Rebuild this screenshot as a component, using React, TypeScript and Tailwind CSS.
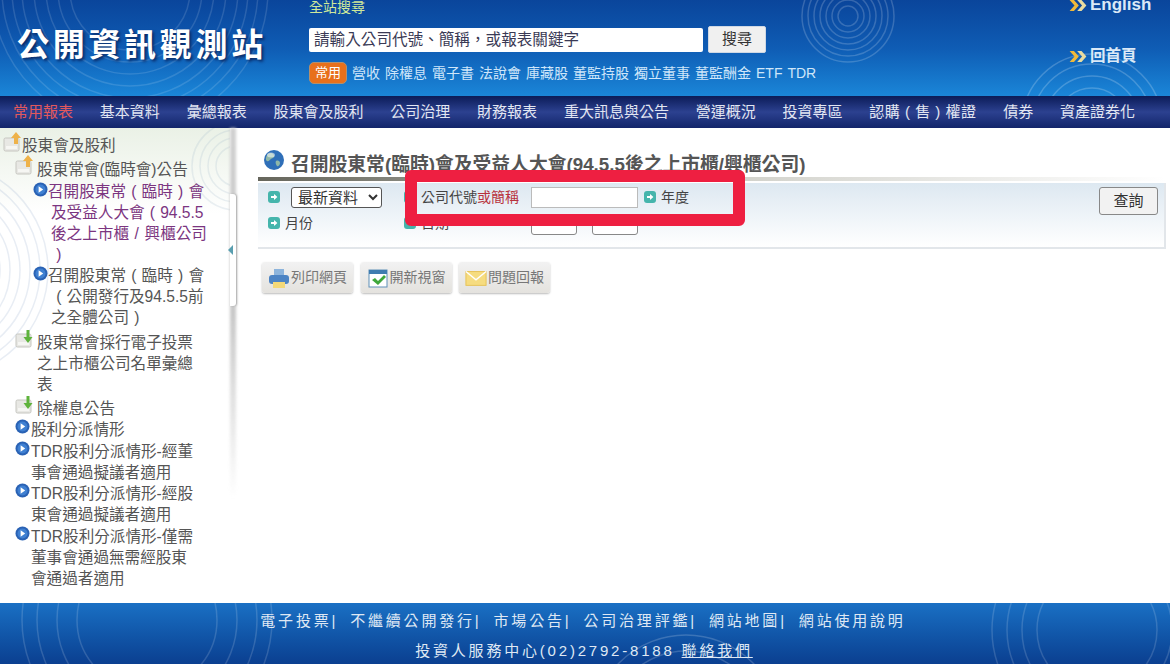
const cjk = "font-['Liberation_Sans','Noto_Sans_CJK_TC',sans-serif]";

function Rings({ className, radii, stroke = "#ffffff", opacity = 0.16 }: { className: string; radii: number[]; stroke?: string; opacity?: number }) {
  const max = radii[radii.length - 1] + 2;
  return (
    <svg className={className} width={max * 2} height={max * 2} viewBox={`${-max} ${-max} ${max * 2} ${max * 2}`} fill="none">
      {radii.map((r) => (
        <circle key={r} r={r} stroke={stroke} strokeOpacity={opacity} strokeWidth="1.5" />
      ))}
    </svg>
  );
}

function Chevrons() {
  return (
    <svg width="20" height="13" viewBox="0 0 17.5 12" className="shrink-0">
      <path d="M1 1h4l4.5 5L5 11H1l4.5-5z" fill="#f0b93a" />
      <path d="M8 1h4l4.5 5L12 11H8l4.5-5z" fill="#e9dca0" />
    </svg>
  );
}

function BlueDot() {
  return (
    <svg width="15" height="15" viewBox="0 0 15 15" className="shrink-0">
      <circle cx="7.5" cy="7.5" r="7" fill="#2a62b4" />
      <circle cx="7.5" cy="7.5" r="5" fill="#3f80d2" />
      <path d="M5.6 4.2l4.6 3.3-4.6 3.3z" fill="#fff" />
    </svg>
  );
}

function Folder({ green }: { green?: boolean }) {
  return (
    <svg width="20" height="20" viewBox="0 0 20 20" className="shrink-0">
      <rect x="1" y="6" width="15" height="13" rx="1.5" fill="#e8e8e4" stroke="#c6c6c0" />
      <rect x="3" y="14" width="11" height="3" fill="#f6f6f3" />
      {green ? (
        <path d="M11.5 2h3v7h3l-4.5 6-4.5-6h3z" fill="#5fb33c" />
      ) : (
        <path d="M13 0l5 6h-3v6h-4V6H8z" fill="#eeb24a" />
      )}
    </svg>
  );
}

function TealArrow() {
  return (
    <svg width="12" height="12" viewBox="0 0 12 12" className="shrink-0">
      <rect width="12" height="12" rx="3" fill="#45b5ac" />
      <path d="M3 5h3V3l3.4 3L6 9V7H3z" fill="#fff" />
    </svg>
  );
}

// the reference's full-width brackets sit in the middle of their box
function Fw({ children }: { children: string }) {
  return <span className="inline-block w-[1em] text-center">{children}</span>;
}

const quick = ["營收", "除權息", "電子書", "法說會", "庫藏股", "董監持股", "獨立董事", "董監酬金", "ETF", "TDR"];
const nav = ["基本資料", "彙總報表", "股東會及股利", "公司治理", "財務報表", "重大訊息與公告", "營運概況", "投資專區", "認購 ( 售 ) 權證", "債券", "資產證券化"];
const footerLinks = ["電子投票", "不繼續公開發行", "市場公告", "公司治理評鑑", "網站地圖", "網站使用說明"];

function Header() {
  return (
    <header className="relative flex h-[96px] shrink-0 overflow-hidden bg-gradient-to-b from-[#0a459b] via-[#0f5cb4] to-[#1b86d8]">
      <Rings className="absolute left-[-10px] top-[-150px]" radii={[60, 72, 84, 96, 108, 118, 128, 138]} opacity={0.13} />
      <Rings className="absolute left-[800px] top-[-32px]" radii={[10, 16, 22, 28, 34, 40, 46]} opacity={0.18} />
      <Rings className="absolute left-[1020px] top-[52px]" radii={[24, 36, 48, 60, 70]} opacity={0.2} />
      <div className="relative w-[309px] shrink-0 pl-[17px] pt-[22px]">
        <div className="whitespace-nowrap font-['Noto_Sans_CJK_TC',sans-serif] text-[32px] font-bold leading-[40px] tracking-[3.7px] text-white [text-shadow:2px_2px_3px_#0a2a66]">
          公開資訊觀測站
        </div>
      </div>
      <div className="relative w-[700px] shrink-0">
        <div className="h-[26px] text-[14px] leading-[15px] text-[#cfe89a]">全站搜尋</div>
        <div className="flex items-center gap-[5px]">
          <div className="flex h-[24px] w-[394px] items-center rounded-[2px] bg-white pl-[5px] text-[15.6px] text-[#3a3a55]">請輸入公司代號、簡稱，或報表關鍵字</div>
          <button className="h-[27px] w-[58px] rounded-[2px] border border-[#cfd8e4] bg-[#f0f0f0] text-[15px] text-[#333]">搜尋</button>
        </div>
        <div className="mt-[9px] flex items-center gap-[5px] text-[14px] text-[#cfe6fa]">
          <span className="flex h-[22px] w-[38px] items-center justify-center rounded-[5px] border border-[#b09070] bg-[#e8701c] text-[13px] text-white">常用</span>
          {quick.map((q) => (
            <span key={q}>{q}</span>
          ))}
        </div>
      </div>
      <div className="relative flex-1 pl-[59px]">
        <div className="mt-[-4px] flex items-center gap-[2px] text-[17px] font-bold leading-[18px] text-[#dbe9f7]">
          <Chevrons />
          English
        </div>
        <div className="mt-[33px] flex items-center gap-[2px] text-[15.5px] font-bold leading-[18px] text-[#dbe9f7]">
          <Chevrons />
          回首頁
        </div>
      </div>
    </header>
  );
}

function Nav() {
  return (
    <nav className="flex h-[32px] shrink-0 items-center gap-[26.8px] bg-gradient-to-b from-[#0c1c58] via-[#2c4190] to-[#12256a] pl-[13px] text-[15px] text-[#e2e6f2]">
      <span className="text-[#e2585c]">常用報表</span>
      {nav.map((n) => (
        <span key={n} className={n.includes("(") ? "whitespace-nowrap tracking-[0.5px]" : "whitespace-nowrap"}>{n}</span>
      ))}
    </nav>
  );
}

function Sidebar() {
  return (
    <aside className="relative w-[230px] shrink-0 overflow-hidden bg-gradient-to-b from-[#eaf1e6] to-white to-[18%] text-[15.6px] leading-[21px] text-[#555]">
      <Rings className="absolute left-[-170px] top-[32px]" radii={[60, 70, 80, 90, 100, 108]} stroke="#8aa6c8" opacity={0.2} />
      <Rings className="absolute left-[190px] top-[-8px]" radii={[20, 28, 36, 44]} stroke="#9bb3c8" opacity={0.2} />
      <div className="relative pt-[7px]">
        <div className="flex pl-[3px]">
          <span className="-mt-[3px]"><Folder /></span>
          <span className="-ml-px">股東會及股利</span>
        </div>
        <div className="mt-[3px] flex pl-[15px]">
          <span className="-mt-[4px] mr-[2px]"><Folder /></span>
          <span>股東常會(臨時會)公告</span>
        </div>
        <div className="mt-[1px] flex pl-[33px]">
          <span className="mt-[1px]"><BlueDot /></span>
          <div className="text-[#7b3580]">
            <div>召開股東常<Fw>(</Fw>臨時<Fw>)</Fw>會</div>
            <div className="pl-[3px]">及受益人大會<Fw>(</Fw>94.5.5</div>
            <div className="pl-[3px]">後之上市櫃<Fw>/</Fw>興櫃公司</div>
            <div className="pl-[3px]"><Fw>)</Fw></div>
          </div>
        </div>
        <div className="flex pl-[33px]">
          <span className="mt-[1px]"><BlueDot /></span>
          <div>
            <div>召開股東常<Fw>(</Fw>臨時<Fw>)</Fw>會</div>
            <div className="pl-[3px]"><Fw>(</Fw>公開發行及94.5.5前</div>
            <div className="pl-[3px]">之全體公司<Fw>)</Fw></div>
          </div>
        </div>
        <div className="mt-[4px] flex pl-[15px]">
          <span className="-mt-[4px] mr-[2px]"><Folder green /></span>
          <div>
            <div>股東常會採行電子投票</div>
            <div>之上市櫃公司名單彙總</div>
            <div>表</div>
          </div>
        </div>
        <div className="mt-[3px] flex pl-[15px]">
          <span className="-mt-[4px] mr-[2px]"><Folder green /></span>
          <span>除權息公告</span>
        </div>
        <div className="flex pl-[15px]">
          <span className="mr-[1px]"><BlueDot /></span>
          <span>股利分派情形</span>
        </div>
        <div className="mt-[1px] flex pl-[15px]">
          <span className="mr-[1px]"><BlueDot /></span>
          <div>
            <div>TDR股利分派情形-經董</div>
            <div>事會通過擬議者適用</div>
          </div>
        </div>
        <div className="flex pl-[15px]">
          <span className="mr-[1px]"><BlueDot /></span>
          <div>
            <div>TDR股利分派情形-經股</div>
            <div>東會通過擬議者適用</div>
          </div>
        </div>
        <div className="mt-[1px] flex pl-[15px]">
          <span className="mr-[1px]"><BlueDot /></span>
          <div>
            <div>TDR股利分派情形-僅需</div>
            <div>董事會通過無需經股東</div>
            <div>會通過者適用</div>
          </div>
        </div>
      </div>
    </aside>
  );
}

function Splitter() {
  return (
    <div className="relative w-[28px] shrink-0">
      <div className="h-[370px] w-[6px] bg-gradient-to-b from-[#d0d0d0] via-[#c8c8c8] to-transparent blur-[1.5px]" />
      <div className="absolute left-0 top-[66px] flex h-[112px] w-[6px] items-center rounded-r-[3px] bg-white shadow-[1px_0_2px_#aaa]">
        <svg width="6" height="10" viewBox="0 0 6 10" className="-ml-[2px]">
          <path d="M5 0v10L0 5z" fill="#5a9fb0" />
        </svg>
      </div>
    </div>
  );
}

function ToolButton({ label, icon }: { label: string; icon: React.ReactNode }) {
  return (
    <div className="flex h-[31px] w-[91px] items-center gap-[1px] whitespace-nowrap rounded-[3px] bg-gradient-to-b from-[#f2f2f2] to-[#e4e2de] pl-[6px] text-[14px] text-[#777] shadow-[0_1px_2px_#bbb]">
      {icon}
      {label}
    </div>
  );
}

function Main() {
  return (
    <main className="flex-1 pr-[4px]">
      <div className="flex items-end pl-[5px] pt-[21px]">
        <svg width="22" height="22" viewBox="0 0 22 22" className="mb-[6px] shrink-0">
          <circle cx="11" cy="11" r="10" fill="#2f6fb8" />
          <path d="M5 5c3-2 5-1 6 1s-1 3-3 4-2 3-4 2-1-5 1-7zM13 12c2-1 4 0 4 2s-2 4-3 3-2-4-1-5z" fill="#8fb7a8" />
          <ellipse cx="8" cy="6" rx="4" ry="2.5" fill="#fff" fillOpacity="0.5" />
        </svg>
        <h1 className="ml-[6px] whitespace-nowrap text-[18.8px] font-semibold leading-[24px] text-[#555]">召開股東常(臨時)會及受益人大會(94.5.5後之上市櫃/興櫃公司)</h1>
      </div>
      <div className="h-[4px] bg-gradient-to-r from-[#66665c] via-[#cfcfc8] to-white" />
      <div className="mt-[2px] flex h-[66px] justify-between border-b-2 border-r-2 border-[#e2e6ea] bg-gradient-to-b from-[#dde8f1] to-white pl-[10px] pr-[6px] text-[14px] text-[#444]">
        <div className="grid grid-cols-[136px_127px_113px] grid-rows-[26px_26px] items-center pt-[1px]">
          <div className="flex items-center gap-[11px]">
            <TealArrow />
            <select className="h-[21px] w-[91px] rounded-[3px] border border-[#555] bg-white pl-[2px] text-[15px] text-[#333]" defaultValue="最新資料">
              <option>最新資料</option>
            </select>
          </div>
          <div className="flex items-center gap-[5px]">
            <TealArrow />
            <span className="whitespace-nowrap">公司代號<span className="text-[#b8323c]">或簡稱</span></span>
          </div>
          <div className="flex items-center">
            <input className="h-[21px] w-[107px] border border-[#bbb] bg-white" />
            <span className="ml-[6px]"><TealArrow /></span>
            <span className="ml-[5px] whitespace-nowrap">年度</span>
          </div>
          <div className="flex items-center gap-[5px]">
            <TealArrow />
            月份
          </div>
          <div className="flex items-center gap-[5px]">
            <TealArrow />
            日期
          </div>
          <div className="mt-[2px] flex items-center gap-[15px]">
            <div className="h-[21px] w-[46px] rounded-[3px] border border-[#888] bg-white" />
            <div className="h-[21px] w-[46px] rounded-[3px] border border-[#888] bg-white" />
          </div>
        </div>
        <button className="mt-[4px] h-[28px] w-[59px] rounded-[3px] border border-[#888] bg-[#f2f2f2] text-[15px] text-[#333]">查詢</button>
      </div>
      <div className="mt-[13px] flex gap-[7.5px] pl-[4px]">
        <ToolButton
          label="列印網頁"
          icon={
            <svg width="22" height="22" viewBox="0 0 22 22" className="shrink-0">
              <rect x="6" y="2" width="10" height="7" fill="#8db4dc" />
              <rect x="1" y="8" width="20" height="9" rx="3" fill="#4d84c4" />
              <rect x="5" y="15" width="12" height="6" fill="#f3d878" />
            </svg>
          }
        />
        <ToolButton
          label="開新視窗"
          icon={
            <svg width="22" height="22" viewBox="0 0 22 22" className="shrink-0">
              <rect x="2" y="3" width="18" height="17" fill="#fff" stroke="#5f8fb8" />
              <rect x="2" y="3" width="18" height="4" fill="#3f7cb0" />
              <path d="M5 13l3-2 3 3 6-6 2 2-8 8z" fill="#3fa83c" />
            </svg>
          }
        />
        <ToolButton
          label="問題回報"
          icon={
            <svg width="22" height="22" viewBox="0 0 24 22" className="shrink-0">
              <rect x="1" y="4" width="22" height="15" fill="#f6dc80" stroke="#e6c050" />
              <path d="M1 4l11 9 11-9" fill="none" stroke="#fff" strokeWidth="1.5" />
            </svg>
          }
        />
      </div>
    </main>
  );
}

function Footer() {
  return (
    <footer className="relative h-[61px] shrink-0 overflow-hidden bg-gradient-to-b from-[#1a70c4] to-[#0b3f90] text-[15px] tracking-[2.8px] text-[#dfe8f4]">
      <Rings className="absolute left-[590px] top-[30px]" radii={[30, 46, 62, 78, 94]} opacity={0.18} />
      <Rings className="absolute left-[990px] top-[-80px]" radii={[60, 75, 90, 105]} opacity={0.15} />
      <Rings className="absolute left-[20px] top-[-110px]" radii={[70, 90, 110, 125]} opacity={0.15} />
      <div className="relative flex justify-center pr-[4px] pt-[8px] leading-[20px]">
        {footerLinks.map((f, i) => (
          <span key={f} className="whitespace-nowrap">
            {f}
            {i < footerLinks.length - 1 && <span className="mr-[12px]">|</span>}
          </span>
        ))}
      </div>
      <div className="relative mt-[10px] pr-[2px] text-center leading-[20px]">
        投資人服務中心(02)2792-8188 <span className="underline">聯絡我們</span>
      </div>
    </footer>
  );
}

export default function App() {
  return (
    <div className={`relative flex h-[664px] w-[1170px] flex-col overflow-hidden bg-white ${cjk}`}>
      <Header />
      <Nav />
      <div className="flex min-h-0 flex-1 bg-white">
        <Sidebar />
        <Splitter />
        <Main />
      </div>
      <Footer />
      <div className="absolute left-[405px] top-[170px] h-[56px] w-[340px] rounded-[6px] border-[12px] border-[#ee1f41]" />
    </div>
  );
}
